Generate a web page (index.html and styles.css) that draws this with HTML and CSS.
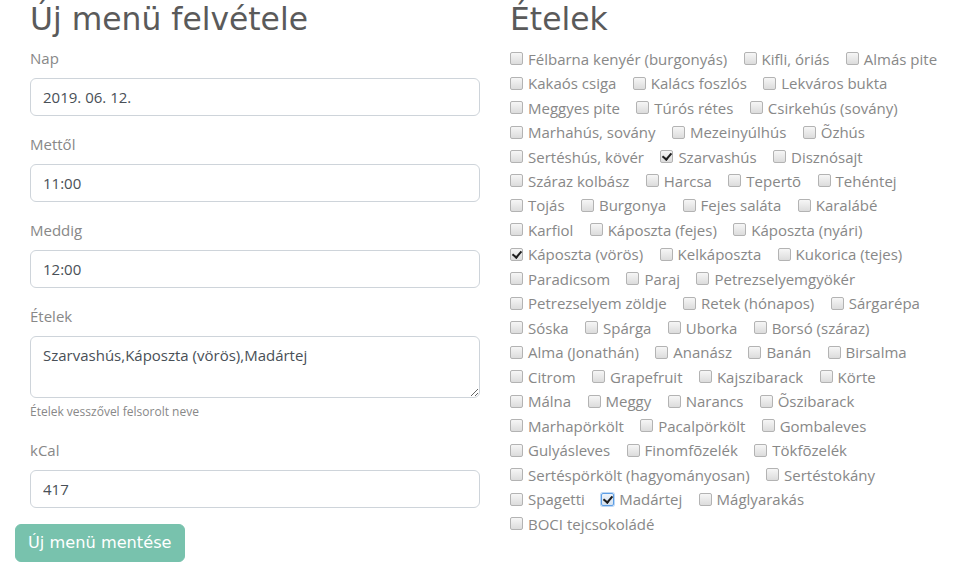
FILE: index.html
```html
<!DOCTYPE html>
<html lang="hu">
<head>
<meta charset="utf-8">
<title>Új menü felvétele</title>
<link rel="stylesheet" href="styles.css">
</head>
<body>
<main class="page">
  <section class="col col-form">
    <form class="menu-form">
      <h2 class="heading">Új menü felvétele</h2>
      <div class="form-group">
        <label class="form-label" for="nap">Nap</label>
        <input class="form-control" id="nap" type="text" value="2019. 06. 12.">
      </div>
      <div class="form-group">
        <label class="form-label" for="mettol">Mettől</label>
        <input class="form-control" id="mettol" type="text" value="11:00">
      </div>
      <div class="form-group">
        <label class="form-label" for="meddig">Meddig</label>
        <input class="form-control" id="meddig" type="text" value="12:00">
      </div>
      <div class="form-group">
        <label class="form-label" for="etelek">Ételek</label>
        <textarea class="form-control textarea" id="etelek" rows="2">Szarvashús,Káposzta (vörös),Madártej</textarea>
        <small class="form-text">Ételek vesszővel felsorolt neve</small>
      </div>
      <div class="form-group">
        <label class="form-label" for="kcal">kCal</label>
        <input class="form-control" id="kcal" type="text" value="417">
      </div>
      <button class="btn-primary" type="button">Új menü mentése</button>
    </form>
  </section>
  <section class="col col-foods">
    <h2 class="heading">Ételek</h2>
    <div class="food-list">
      <label class="food"><input type="checkbox" class="cb">Félbarna kenyér (burgonyás)</label>
      <label class="food"><input type="checkbox" class="cb">Kifli, óriás</label>
      <label class="food"><input type="checkbox" class="cb">Almás pite</label>
      <label class="food"><input type="checkbox" class="cb">Kakaós csiga</label>
      <label class="food"><input type="checkbox" class="cb">Kalács foszlós</label>
      <label class="food"><input type="checkbox" class="cb">Lekváros bukta</label>
      <label class="food"><input type="checkbox" class="cb">Meggyes pite</label>
      <label class="food"><input type="checkbox" class="cb">Túrós rétes</label>
      <label class="food"><input type="checkbox" class="cb">Csirkehús (sovány)</label>
      <label class="food"><input type="checkbox" class="cb">Marhahús, sovány</label>
      <label class="food"><input type="checkbox" class="cb">Mezeinyúlhús</label>
      <label class="food"><input type="checkbox" class="cb">Õzhús</label>
      <label class="food"><input type="checkbox" class="cb">Sertéshús, kövér</label>
      <label class="food"><input type="checkbox" class="cb" checked>Szarvashús</label>
      <label class="food"><input type="checkbox" class="cb">Disznósajt</label>
      <label class="food"><input type="checkbox" class="cb">Száraz kolbász</label>
      <label class="food"><input type="checkbox" class="cb">Harcsa</label>
      <label class="food"><input type="checkbox" class="cb">Tepertõ</label>
      <label class="food"><input type="checkbox" class="cb">Tehéntej</label>
      <label class="food"><input type="checkbox" class="cb">Tojás</label>
      <label class="food"><input type="checkbox" class="cb">Burgonya</label>
      <label class="food"><input type="checkbox" class="cb">Fejes saláta</label>
      <label class="food"><input type="checkbox" class="cb">Karalábé</label>
      <label class="food"><input type="checkbox" class="cb">Karfiol</label>
      <label class="food"><input type="checkbox" class="cb">Káposzta (fejes)</label>
      <label class="food"><input type="checkbox" class="cb">Káposzta (nyári)</label>
      <label class="food"><input type="checkbox" class="cb" checked>Káposzta (vörös)</label>
      <label class="food"><input type="checkbox" class="cb">Kelkáposzta</label>
      <label class="food"><input type="checkbox" class="cb">Kukorica (tejes)</label>
      <label class="food"><input type="checkbox" class="cb">Paradicsom</label>
      <label class="food"><input type="checkbox" class="cb">Paraj</label>
      <label class="food"><input type="checkbox" class="cb">Petrezselyemgyökér</label>
      <label class="food"><input type="checkbox" class="cb">Petrezselyem zöldje</label>
      <label class="food"><input type="checkbox" class="cb">Retek (hónapos)</label>
      <label class="food"><input type="checkbox" class="cb">Sárgarépa</label>
      <label class="food"><input type="checkbox" class="cb">Sóska</label>
      <label class="food"><input type="checkbox" class="cb">Spárga</label>
      <label class="food"><input type="checkbox" class="cb">Uborka</label>
      <label class="food"><input type="checkbox" class="cb">Borsó (száraz)</label>
      <label class="food"><input type="checkbox" class="cb">Alma (Jonathán)</label>
      <label class="food"><input type="checkbox" class="cb">Ananász</label>
      <label class="food"><input type="checkbox" class="cb">Banán</label>
      <label class="food"><input type="checkbox" class="cb">Birsalma</label>
      <label class="food"><input type="checkbox" class="cb">Citrom</label>
      <label class="food"><input type="checkbox" class="cb">Grapefruit</label>
      <label class="food"><input type="checkbox" class="cb">Kajszibarack</label>
      <label class="food"><input type="checkbox" class="cb">Körte</label>
      <label class="food"><input type="checkbox" class="cb">Málna</label>
      <label class="food"><input type="checkbox" class="cb">Meggy</label>
      <label class="food"><input type="checkbox" class="cb">Narancs</label>
      <label class="food"><input type="checkbox" class="cb">Õszibarack</label>
      <label class="food"><input type="checkbox" class="cb">Marhapörkölt</label>
      <label class="food"><input type="checkbox" class="cb">Pacalpörkölt</label>
      <label class="food"><input type="checkbox" class="cb">Gombaleves</label>
      <label class="food"><input type="checkbox" class="cb">Gulyásleves</label>
      <label class="food"><input type="checkbox" class="cb">Finomfõzelék</label>
      <label class="food"><input type="checkbox" class="cb">Tökfõzelék</label>
      <label class="food"><input type="checkbox" class="cb">Sertéspörkölt (hagyományosan)</label>
      <label class="food"><input type="checkbox" class="cb">Sertéstokány</label>
      <label class="food"><input type="checkbox" class="cb">Spagetti</label>
      <label class="food"><input type="checkbox" class="cb cb-focus" checked>Madártej</label>
      <label class="food"><input type="checkbox" class="cb">Máglyarakás</label>
      <label class="food"><input type="checkbox" class="cb">BOCI tejcsokoládé</label>
    </div>
  </section>
</main>
</body>
</html>
```
FILE: styles.css
```css
* {
  box-sizing: border-box;
}

html, body {
  margin: 0;
  padding: 0;
  background: #fff;
}

body {
  font-family: "Open Sans", "Noto Sans", sans-serif;
  font-size: 15px;
  line-height: 24px;
  color: #888;
}

.page {
  display: grid;
  grid-template-columns: 495px 1fr;
}

.col-form {
  padding-left: 15px;
}

.col-foods {
  padding: 0 15px;
}

.heading {
  margin: 0 0 8px;
  font-family: "DejaVu Sans", sans-serif;
  font-weight: 400;
  font-size: 31.4px;
  line-height: 38.4px;
  color: #5a5a5a;
}

.menu-form .heading {
  padding-left: 15px;
}

.form-group {
  display: flex;
  flex-direction: column;
  padding: 0 15px;
  margin-bottom: 16px;
}

.form-label {
  margin-bottom: 8px;
  line-height: 24px;
}

.form-control {
  display: block;
  width: 100%;
  height: 38px;
  padding: 6px 12px;
  font-family: "Open Sans", "Noto Sans", sans-serif;
  font-size: 15px;
  line-height: 24px;
  color: #495057;
  background: #fff;
  border: 1px solid #ced4da;
  border-radius: 6px;
  outline: none;
}

.textarea {
  height: 62px;
  resize: vertical;
}

.form-text {
  display: block;
  margin-top: 4px;
  font-size: 12px;
  line-height: 19.2px;
  color: #888;
}

.btn-primary {
  display: inline-block;
  height: 38px;
  padding: 0 12px;
  font-family: "DejaVu Sans", sans-serif;
  font-size: 16.2px;
  line-height: 36px;
  color: #fff;
  background: #78c2ad;
  border: 1px solid #78c2ad;
  border-radius: 6px;
  cursor: pointer;
}

.food-list {
  display: flex;
  flex-wrap: wrap;
  column-gap: 4.4px;
}

.food {
  display: inline-flex;
  align-items: center;
  height: 24.47px;
  margin-right: 12px;
  white-space: nowrap;
}

.cb {
  position: relative;
  flex: none;
  appearance: none;
  -webkit-appearance: none;
  width: 13px;
  height: 13px;
  margin: 0 5px 0 0;
  border: 1px solid #b3b3b3;
  border-radius: 2px;
  background: linear-gradient(to bottom, #f6f6f6, #dcdcdc);
}

.cb:checked::after {
  content: "";
  position: absolute;
  left: 3px;
  top: 0px;
  width: 4px;
  height: 7px;
  border-right: 2px solid #1e1e1e;
  border-bottom: 2px solid #1e1e1e;
  transform: rotate(40deg);
}

.cb-focus {
  border-color: #5c9ee6;
  box-shadow: 0 0 0 1px #bcd7f4;
  background: linear-gradient(to bottom, #eef4fb, #d5e2f0);
}
```
